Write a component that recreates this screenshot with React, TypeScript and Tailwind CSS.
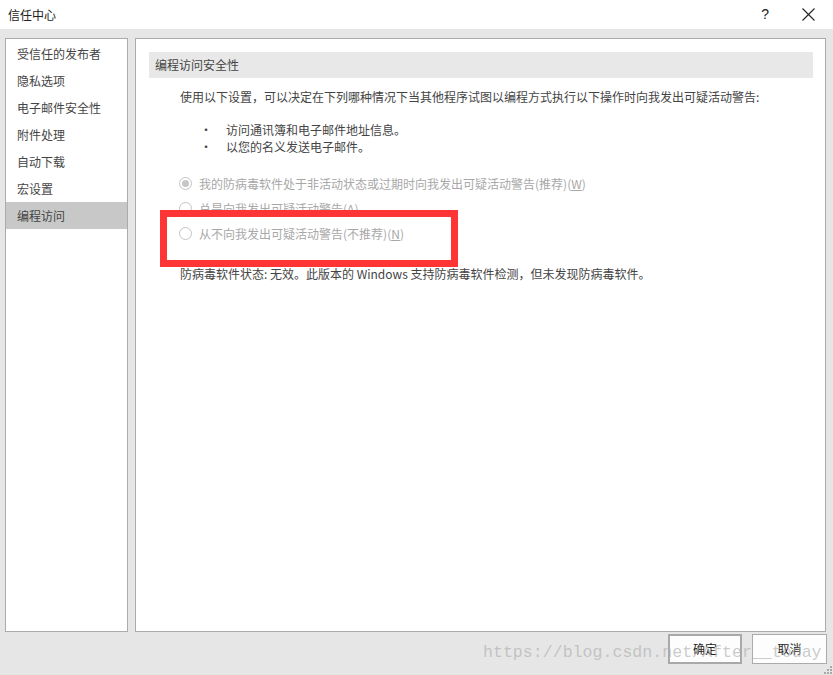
import React from "react";

const font = { fontFamily: '"Noto Sans CJK SC", "Noto Sans", sans-serif' };

const navItems = ["受信任的发布者", "隐私选项", "电子邮件安全性", "附件处理", "自动下载", "宏设置", "编程访问"];

function Radio({ checked, label, hot, rest }: { checked?: boolean; label: string; hot: string; rest: string }) {
  return (
    <div className="flex items-center h-[25px]">
      <div className="w-[13px] h-[13px] rounded-full border border-[#c4c4c4] bg-white flex items-center justify-center">
        {checked && <div className="w-[7px] h-[7px] rounded-full bg-[#c6c6c6]" />}
      </div>
      <span className="ml-[7px] text-[#a8a8a8]">
        {label}(<span className="underline">{hot}</span>){rest}
      </span>
    </div>
  );
}

export default function App() {
  return (
    <div className="w-[833px] h-[675px] bg-[#e6e6e6] flex flex-col relative overflow-hidden text-[12px] text-[#444]" style={font}>
      {/* title bar */}
      <div className="h-[29px] bg-white flex items-center justify-between pl-[8px] pr-[18px] shrink-0">
        <span className="text-[12px] text-[#222]">信任中心</span>
        <div className="flex items-center gap-[33px]">
          <span className="text-[14px] text-[#222]" style={{ fontFamily: '"Liberation Sans", sans-serif' }}>?</span>
          <svg width="13" height="13" viewBox="0 0 13 13">
            <path d="M0.5 0.5 L12.5 12.5 M12.5 0.5 L0.5 12.5" stroke="#222" strokeWidth="1.1" fill="none" />
          </svg>
        </div>
      </div>

      {/* body */}
      <div className="flex gap-[7px] pl-[5px] pr-[7px] pt-[9px] h-[603px] shrink-0">
        <div className="w-[123px] h-[594px] bg-white border border-[#ababab] pt-[1px]">
          {navItems.map((t, i) => (
            <div
              key={t}
              className={`h-[27px] flex items-center pl-[11px] ${i === navItems.length - 1 ? "bg-[#c8c8c8]" : ""}`}
            >
              {t}
            </div>
          ))}
        </div>
        <div className="flex-1 h-[594px] bg-white border border-[#ababab] pt-[13px] pl-[13px] pr-[12px] relative">
          <div className="h-[26px] bg-[#e8e8e8] flex items-center pl-[6px] text-[#444]">编程访问安全性</div>
          <div className="pl-[31px] pt-[10px] leading-[17px]">
            <div>使用以下设置，可以决定在下列哪种情况下当其他程序试图以编程方式执行以下操作时向我发出可疑活动警告:</div>
            <div className="mt-[16px] pl-[20px]">
              <div className="flex">
                <span className="w-[26px]">•</span>
                <span>访问通讯簿和电子邮件地址信息。</span>
              </div>
              <div className="flex">
                <span className="w-[26px]">•</span>
                <span>以您的名义发送电子邮件。</span>
              </div>
            </div>
            <div className="mt-[16px] -ml-[1px]">
              <Radio checked label="我的防病毒软件处于非活动状态或过期时向我发出可疑活动警告(推荐)" hot="W" rest="" />
              <Radio label="总是向我发出可疑活动警告" hot="A" rest="" />
              <Radio label="从不向我发出可疑活动警告(不推荐)" hot="N" rest="" />
            </div>
            <div className="mt-[19px]">防病毒软件状态: 无效。此版本的 Windows 支持防病毒软件检测，但未发现防病毒软件。</div>
          </div>
        </div>
      </div>

      {/* footer */}
      <div className="flex justify-end gap-[10px] pr-[6px] pt-[2px]">
        <button className="w-[74px] h-[30px] bg-[#fdfdfd] border-2 border-[#a9a9a9] text-[#222] text-[12px]">确定</button>
        <button className="w-[75px] h-[30px] bg-[#fdfdfd] border border-[#ababab] text-[#222] text-[12px]">取消</button>
      </div>

      {/* red highlight box */}
      <div className="absolute left-[160px] top-[210px] w-[298px] h-[57px] border-[7px] border-[#fe3535]" />

      {/* watermark */}
      <div
        className="absolute left-[483px] top-[643px] text-[16.6px] leading-[20px] text-[rgba(170,170,170,0.6)] whitespace-nowrap"
        style={{ fontFamily: '"Liberation Mono", monospace' }}
      >
        https://blog.csdn.net/After__today
      </div>

      {/* resize grip */}
      <svg className="absolute right-[1px] bottom-[1px]" width="8" height="8" viewBox="0 0 8 8">
        <rect x="6" y="0" width="2" height="2" fill="#a8a8a8" />
        <rect x="3" y="3" width="2" height="2" fill="#a8a8a8" />
        <rect x="6" y="3" width="2" height="2" fill="#a8a8a8" />
        <rect x="0" y="6" width="2" height="2" fill="#a8a8a8" />
        <rect x="3" y="6" width="2" height="2" fill="#a8a8a8" />
        <rect x="6" y="6" width="2" height="2" fill="#a8a8a8" />
      </svg>
    </div>
  );
}
